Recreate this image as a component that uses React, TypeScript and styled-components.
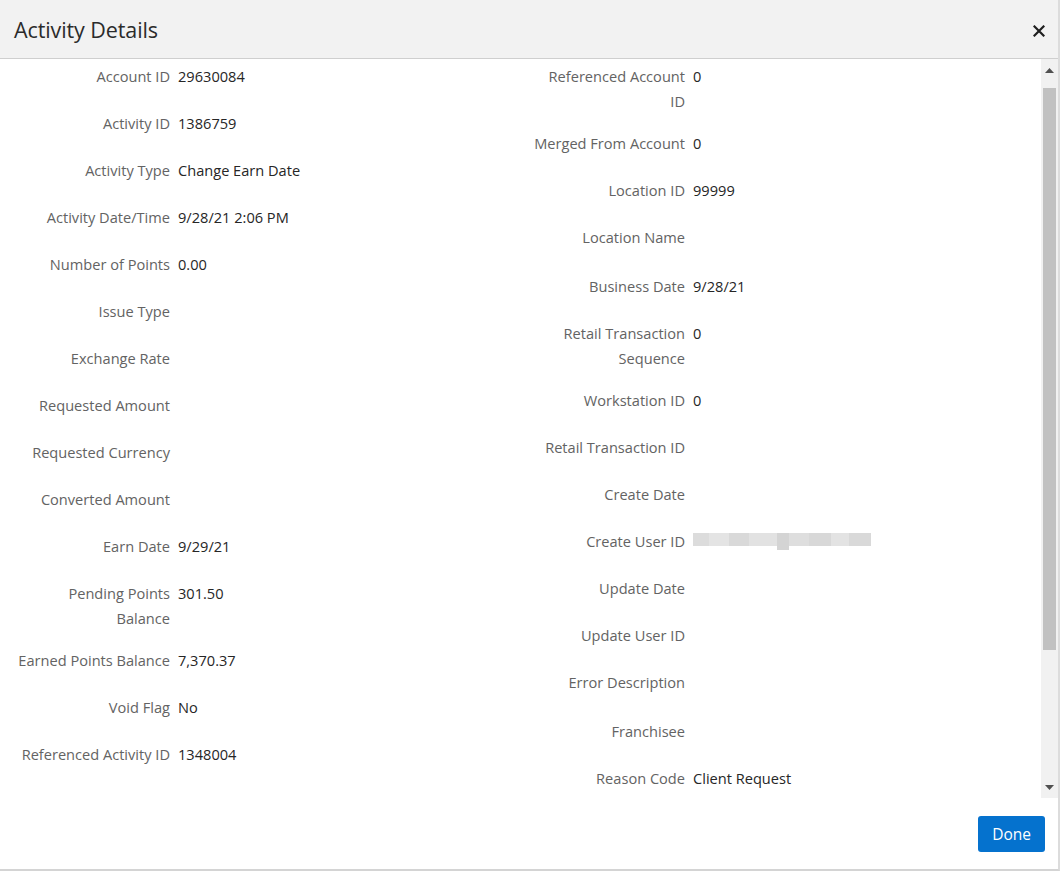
import { createGlobalStyle } from "styled-components";
import styled from "styled-components";

const GlobalStyle = createGlobalStyle`
  html, body {
    margin: 0;
    padding: 0;
    background: #ffffff;
  }
  body {
    font-family: "Open Sans", "Noto Sans", "Liberation Sans", sans-serif;
  }
`;

interface Field {
  label: string;
  value?: string;
  masked?: boolean;
  extra?: boolean;
}

const leftFields: Field[] = [
  { label: "Account ID", value: "29630084" },
  { label: "Activity ID", value: "1386759" },
  { label: "Activity Type", value: "Change Earn Date" },
  { label: "Activity Date/Time", value: "9/28/21 2:06 PM" },
  { label: "Number of Points", value: "0.00" },
  { label: "Issue Type" },
  { label: "Exchange Rate" },
  { label: "Requested Amount" },
  { label: "Requested Currency" },
  { label: "Converted Amount" },
  { label: "Earn Date", value: "9/29/21" },
  { label: "Pending Points Balance", value: "301.50" },
  { label: "Earned Points Balance", value: "7,370.37" },
  { label: "Void Flag", value: "No" },
  { label: "Referenced Activity ID", value: "1348004" },
];

const rightFields: Field[] = [
  { label: "Referenced Account ID", value: "0" },
  { label: "Merged From Account", value: "0" },
  { label: "Location ID", value: "99999" },
  { label: "Location Name", extra: true },
  { label: "Business Date", value: "9/28/21" },
  { label: "Retail Transaction Sequence", value: "0" },
  { label: "Workstation ID", value: "0" },
  { label: "Retail Transaction ID" },
  { label: "Create Date" },
  { label: "Create User ID", masked: true },
  { label: "Update Date" },
  { label: "Update User ID" },
  { label: "Error Description", extra: true },
  { label: "Franchisee" },
  { label: "Reason Code", value: "Client Request" },
];

const Dialog = styled.div`
  width: 1060px;
  height: 871px;
  box-sizing: border-box;
  display: flex;
  flex-direction: column;
  border-right: 2px solid #dcdcdc;
  border-bottom: 2px solid #d4d4d4;
  background: #ffffff;
`;

const Header = styled.div`
  height: 58px;
  flex: none;
  display: flex;
  align-items: center;
  justify-content: space-between;
  padding: 0 13px 0 14px;
  background: #f2f2f2;
  border-bottom: 1px solid #cfcfcf;
`;

const Title = styled.h1`
  margin: 0;
  font-size: 21.5px;
  font-weight: 400;
  color: #2b2b2b;
  letter-spacing: -0.1px;
`;

const CloseButton = styled.button`
  border: none;
  background: transparent;
  padding: 0;
  width: 12px;
  height: 12px;
  display: flex;
  align-items: center;
  justify-content: center;
  cursor: pointer;
  margin-top: 3px;
`;

const BodyRow = styled.div`
  flex: 1;
  display: flex;
  min-height: 0;
`;

const Content = styled.div`
  flex: 1;
  display: grid;
  grid-template-columns: 515px 1fr;
  padding: 5px 0 0 16px;
  align-content: start;
`;

const Column = styled.div`
  display: flex;
  flex-direction: column;
`;

const Row = styled.div<{ $extra?: boolean }>`
  display: flex;
  gap: 8px;
  min-height: ${({ $extra }) => ($extra ? 49 : 47)}px;
  padding-bottom: 17px;
  box-sizing: border-box;
  font-size: 14.6px;
  line-height: 25px;
`;

const Label = styled.div`
  width: 154px;
  flex: none;
  text-align: right;
  color: #636363;
`;

const Value = styled.div`
  color: #262626;
`;

const Masked = styled.div`
  display: flex;
  height: 25px;
  align-items: flex-start;
  padding-top: 4px;
  box-sizing: border-box;
`;

const MaskBlock = styled.span<{ $w: number; $shade: string; $h?: number }>`
  display: block;
  width: ${({ $w }) => $w}px;
  height: ${({ $h }) => $h ?? 13}px;
  background: ${({ $shade }) => $shade};
`;

const Scrollbar = styled.div`
  width: 17px;
  flex: none;
  display: flex;
  flex-direction: column;
  background: #f1f1f1;
`;

const ScrollArrow = styled.div`
  height: 22px;
  flex: none;
  display: flex;
  align-items: center;
  justify-content: center;
`;

const Track = styled.div`
  flex: 1;
  display: flex;
  flex-direction: column;
  padding: 7px 2px 0 2px;
`;

const Thumb = styled.div`
  height: 562px;
  background: #c1c1c1;
`;

const Footer = styled.div`
  height: 71px;
  flex: none;
  display: flex;
  justify-content: flex-end;
  align-items: flex-start;
  padding: 18px 13px 0 0;
  box-sizing: border-box;
`;

const DoneButton = styled.button`
  height: 36px;
  padding: 0 14px;
  border: none;
  border-radius: 3px;
  background: #0572ce;
  color: #ffffff;
  font-family: "Open Sans", "Noto Sans", sans-serif;
  font-size: 15.5px;
  cursor: pointer;
`;

function FieldRow({ field }: { field: Field }) {
  return (
    <Row $extra={field.extra}>
      <Label>{field.label}</Label>
      {field.masked ? (
        <Masked>
          <MaskBlock $w={16} $shade="#dcdcdc" />
          <MaskBlock $w={20} $shade="#e4e4e4" />
          <MaskBlock $w={20} $shade="#d9d9d9" />
          <MaskBlock $w={28} $shade="#e2e2e2" />
          <MaskBlock $w={12} $shade="#d4d4d4" $h={17} />
          <MaskBlock $w={20} $shade="#dedede" />
          <MaskBlock $w={22} $shade="#d8d8d8" />
          <MaskBlock $w={18} $shade="#e3e3e3" />
          <MaskBlock $w={22} $shade="#d9d9d9" />
        </Masked>
      ) : (
        field.value && <Value>{field.value}</Value>
      )}
    </Row>
  );
}

export default function App() {
  return (
    <>
      <GlobalStyle />
      <Dialog>
        <Header>
          <Title>Activity Details</Title>
          <CloseButton aria-label="Close">
            <svg width="12" height="12" viewBox="0 0 12 12">
              <path
                d="M1.5 1.5 L10.5 10.5 M10.5 1.5 L1.5 10.5"
                stroke="#1f1f1f"
                strokeWidth="2.2"
                strokeLinecap="square"
              />
            </svg>
          </CloseButton>
        </Header>
        <BodyRow>
          <Content>
            <Column>
              {leftFields.map((f) => (
                <FieldRow key={f.label} field={f} />
              ))}
            </Column>
            <Column>
              {rightFields.map((f) => (
                <FieldRow key={f.label} field={f} />
              ))}
            </Column>
          </Content>
          <Scrollbar>
            <ScrollArrow>
              <svg width="9" height="5" viewBox="0 0 9 5">
                <path d="M0 5 L4.5 0 L9 5 Z" fill="#505050" />
              </svg>
            </ScrollArrow>
            <Track>
              <Thumb />
            </Track>
            <ScrollArrow>
              <svg width="9" height="5" viewBox="0 0 9 5">
                <path d="M0 0 L4.5 5 L9 0 Z" fill="#505050" />
              </svg>
            </ScrollArrow>
          </Scrollbar>
        </BodyRow>
        <Footer>
          <DoneButton>Done</DoneButton>
        </Footer>
      </Dialog>
    </>
  );
}
